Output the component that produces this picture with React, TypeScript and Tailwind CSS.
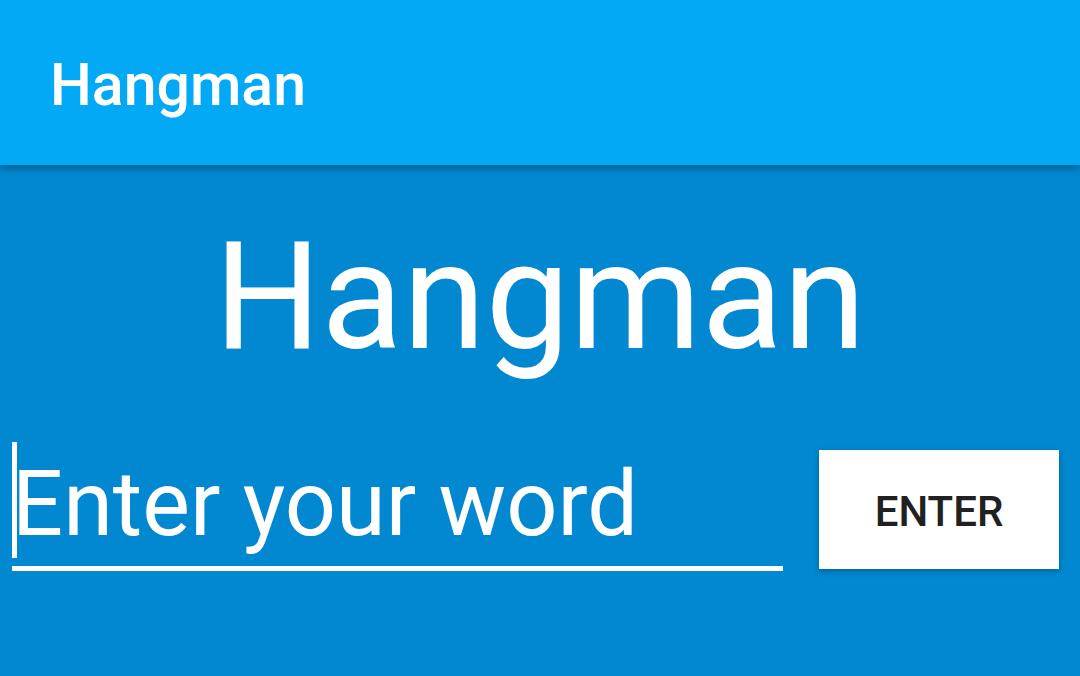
import React from "react";

export default function App() {
  const [word, setWord] = React.useState("");

  return (
    <div className="flex min-h-screen flex-col bg-[#0288D1]" style={{ fontFamily: "Roboto, 'Noto Sans', sans-serif" }}>
      <header className="relative z-10 flex h-[165px] items-center bg-[#03A9F4] pl-[50px] pt-[3px] shadow-[0_3px_8px_rgba(0,0,0,0.35)]">
        <h1 className="text-[59px] leading-none font-medium text-white">Hangman</h1>
      </header>

      <main className="flex flex-col">
        <h2 className="mt-[57px] text-center text-[150px] leading-none font-normal text-white">Hangman</h2>

        <div className="mt-[70px] flex items-start gap-[36px] pl-[12px] pr-[21px]">
          <div className="relative h-[129px] w-[771px] border-b-[5px] border-white pt-[18px]">
            <span className="absolute left-0 top-0 h-[116px] w-[5px] bg-white"></span>
            <div className="text-[90px] leading-none text-white">
              {word || "Enter your word"}
            </div>
          </div>
          <button
            type="button"
            onClick={() => setWord("")}
            className="mt-[8px] flex h-[119px] w-[240px] items-center justify-center bg-white pt-[4px] text-[42px] leading-none font-medium text-[#212121] shadow-[0_2px_6px_rgba(0,0,0,0.3)]"
          >
            ENTER
          </button>
        </div>
      </main>
    </div>
  );
}
